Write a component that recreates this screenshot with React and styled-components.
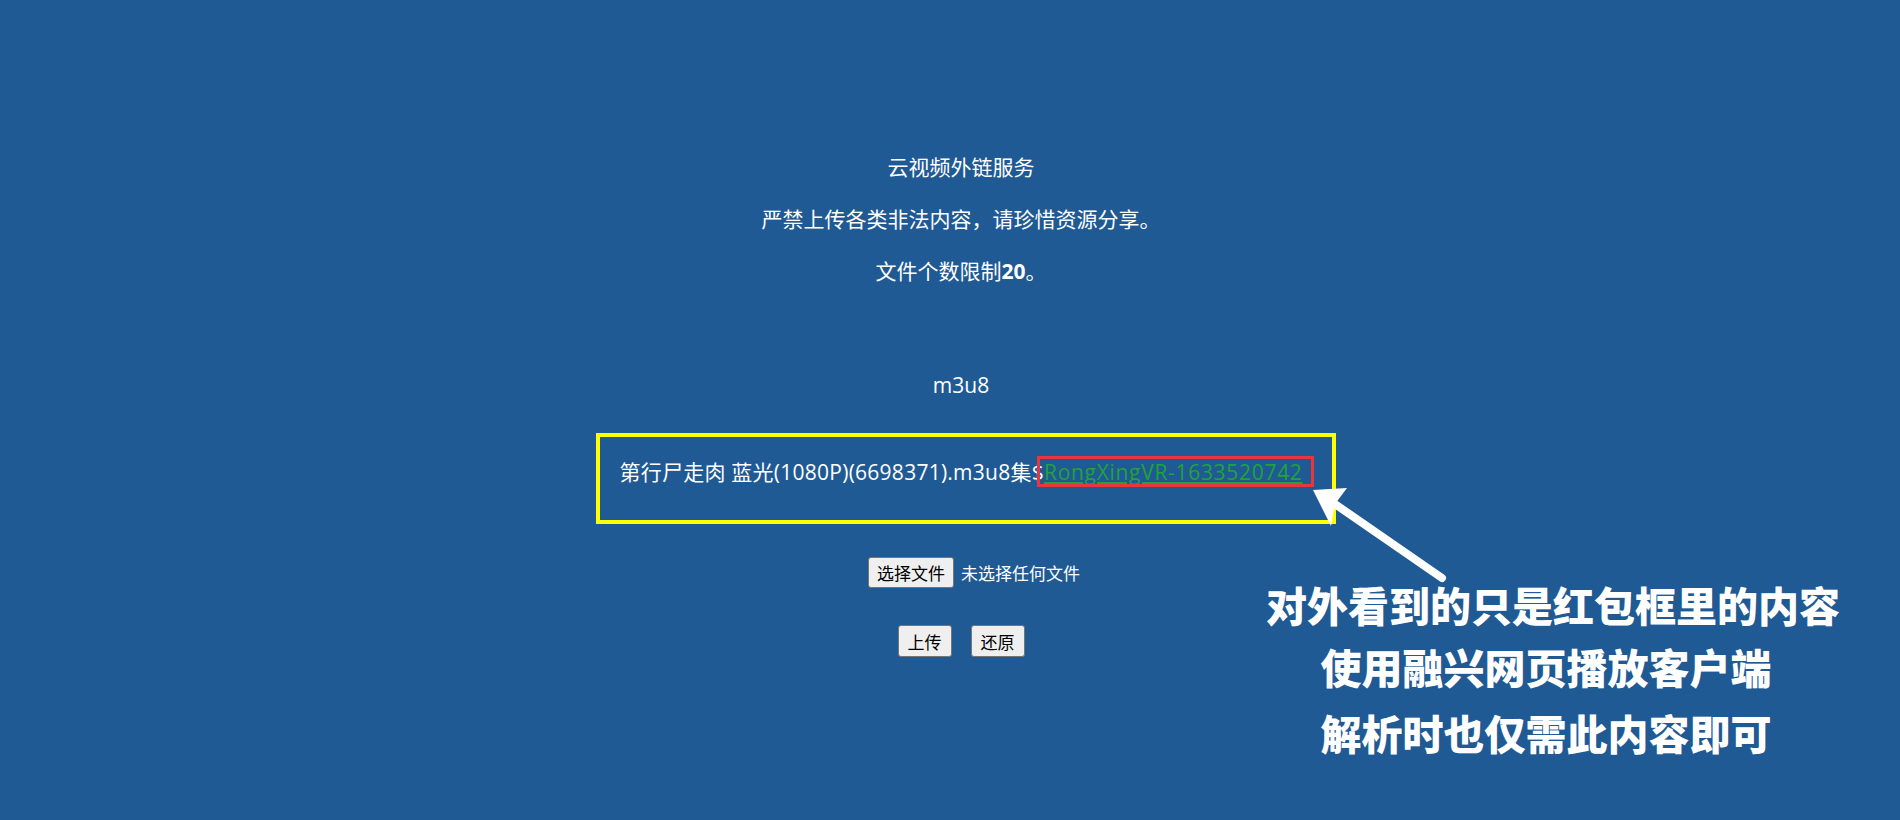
import React from "react";
import styled, { createGlobalStyle } from "styled-components";

const Global = createGlobalStyle`
  html, body {
    margin: 0;
    padding: 0;
    background: #1f5a94;
  }
  body {
    font-family: "Open Sans", "Noto Sans CJK SC", sans-serif;
    color: #ffffff;
    overflow: hidden;
  }
`;

const Page = styled.div`
  position: relative;
  box-sizing: border-box;
  min-height: 820px;
  padding: 151px 0 0 22px;
  text-align: center;
  font-size: 21px;
  line-height: 32px;
`;

const Line = styled.p`
  margin: 0 0 20px;
  b {
    font-weight: 700;
  }
`;

const Label = styled.p`
  margin: 82px 0 0;
`;

const BoxRow = styled.div`
  display: flex;
  justify-content: center;
  margin-top: 32px;
  padding-left: 10px;
`;

const ResultBox = styled.p`
  box-sizing: border-box;
  height: 91px;
  margin: 0;
  padding: 19px 29px 0 19px;
  border: 4px solid #ffff00;
  white-space: nowrap;
  letter-spacing: 0.25px;
`;

const Highlight = styled.span`
  position: relative;
  &::after {
    content: "";
    position: absolute;
    top: -2px;
    bottom: -1px;
    left: -7px;
    right: -11px;
    border: 3px solid #e8363c;
    pointer-events: none;
  }
`;

const Link = styled.a`
  color: #21a23b;
  text-decoration: underline;
  letter-spacing: 0.7px;
`;

const FileRow = styled.div`
  display: flex;
  justify-content: center;
  align-items: center;
  gap: 7px;
  margin-top: 33px;
  padding-left: 26px;
`;

const Actions = styled.div`
  display: flex;
  justify-content: center;
  gap: 19px;
  margin-top: 37px;
`;

const SysButton = styled.button`
  box-sizing: border-box;
  height: ${(p) => (p.$tall ? 32 : 31)}px;
  padding: 0 ${(p) => (p.$wide ? 9 : 8)}px;
  font-family: "Noto Sans CJK SC", sans-serif;
  font-size: 17px;
  line-height: 1;
  color: #000;
  background: #efefef;
  border: 1px solid #767676;
  border-radius: 3px;
`;

const FileName = styled.span`
  font-family: "Noto Sans CJK SC", sans-serif;
  font-size: 17px;
  line-height: 31px;
`;

const Callout = styled.div`
  position: absolute;
  left: 1226px;
  top: 571px;
  width: 640px;
  text-align: center;
  font-family: "Noto Sans CJK SC", sans-serif;
  font-weight: 900;
  font-size: 41px;
  line-height: 66px;
  color: #ffffff;
`;

const CalloutLine = styled.div`
  padding-left: ${(p) => p.$shift || 0}px;
  margin-top: ${(p) => p.$lift || 0}px;
`;

const ArrowSvg = styled.svg`
  position: absolute;
  left: 1300px;
  top: 480px;
  width: 160px;
  height: 110px;
  overflow: visible;
`;

export default function App() {
  return (
    <>
      <Global />
      <Page>
        <Line>云视频外链服务</Line>
        <Line>严禁上传各类非法内容，请珍惜资源分享。</Line>
        <Line>
          文件个数限制<b>20</b>。
        </Line>
        <Label>m3u8</Label>
        <BoxRow>
          <ResultBox>
            第行尸走肉 蓝光(1080P)(6698371).m3u8集$
            <Highlight>
              <Link href="#">RongXingVR-1633520742</Link>
            </Highlight>
          </ResultBox>
        </BoxRow>
        <FileRow>
          <SysButton>选择文件</SysButton>
          <FileName>未选择任何文件</FileName>
        </FileRow>
        <Actions>
          <SysButton $tall $wide>上传</SysButton>
          <SysButton $tall $wide>还原</SysButton>
        </Actions>
        <ArrowSvg viewBox="0 0 160 110">
          <line
            x1="142"
            y1="98"
            x2="32"
            y2="22"
            stroke="#ffffff"
            strokeWidth="8"
            strokeLinecap="round"
          />
          <polygon points="13,10 47,8 35,24 31,46" fill="#ffffff" />
        </ArrowSvg>
        <Callout>
          <CalloutLine $shift={14}>对外看到的只是红包框里的内容</CalloutLine>
          <CalloutLine $lift={-4}>使用融兴网页播放客户端</CalloutLine>
          <CalloutLine>解析时也仅需此内容即可</CalloutLine>
        </Callout>
      </Page>
    </>
  );
}
